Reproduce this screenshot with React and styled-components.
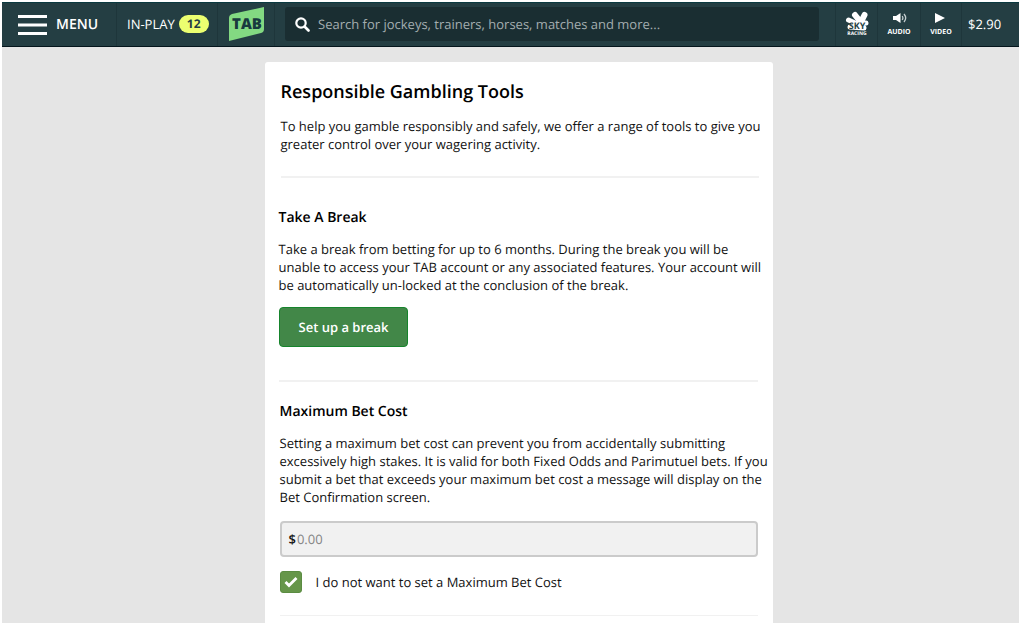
import React from "react";
import styled, { createGlobalStyle } from "styled-components";

const GlobalStyle = createGlobalStyle`
  *, *::before, *::after { box-sizing: border-box; }
  body {
    margin: 0;
    background: #fff;
    color: #111;
    font-family: "Open Sans", "Noto Sans", sans-serif;
    font-size: 13px;
    line-height: 18px;
    text-rendering: geometricPrecision;
  }
  h1, h2, p { margin: 0; }
  button, input { font: inherit; text-rendering: inherit; }
`;

const Page = styled.div`
  display: flex;
  flex-direction: column;
  min-height: 100vh;
  padding: 2px 1px 1px 2px;
`;

const TopBar = styled.header`
  display: flex;
  align-items: stretch;
  height: 45px;
  background: #243e43;
  border-top: 1px solid #0b3a41;
  border-bottom: 1px solid #04151c;
  color: #fff;
`;

const BarButton = styled.button`
  display: flex;
  flex-direction: ${(p) => (p.$stacked ? "column" : "row")};
  align-items: center;
  justify-content: ${(p) => (p.$stacked ? "center" : "flex-start")};
  gap: ${(p) => (p.$stacked ? "2px" : "9px")};
  flex: none;
  width: ${(p) => p.$width};
  padding: ${(p) => p.$padding || "0"};
  border: 0;
  border-right: ${(p) => (p.$last ? "0" : "1px solid #1e363b")};
  background: transparent;
  color: inherit;
  font-weight: ${(p) => (p.$strong ? 600 : 400)};
`;

const BarLink = styled.a`
  display: flex;
  align-items: center;
  gap: 4px;
  flex: none;
  width: ${(p) => p.$width};
  padding: ${(p) => p.$padding};
  border-right: 1px solid #1e363b;
  color: inherit;
  text-decoration: none;
`;

const MenuLines = styled.svg`
  flex: none;
  width: 29px;
  height: 20px;
`;

const MenuText = styled.span`
  font-size: 14px;
`;

const Count = styled.span`
  width: 30px;
  border-radius: 9px;
  background: #ecff70;
  color: #243e43;
  font-size: 12px;
  font-weight: 700;
  text-align: center;
`;

const SearchBox = styled.label`
  display: flex;
  align-items: center;
  gap: 8px;
  flex: 1;
  min-width: 0;
  margin: 4px 16px 5px 10px;
  padding: 0 10px;
  border-radius: 3px;
  background: #1a2e32;
`;

const SearchInput = styled.input`
  flex: 1;
  min-width: 0;
  padding: 0;
  border: 0;
  outline: 0;
  background: transparent;
  color: #fff;
  &::placeholder { color: #a3adaf; opacity: 1; }
`;

const Tools = styled.div`
  display: flex;
  border-left: 1px solid #1e363b;
`;

const ToolLabel = styled.span`
  font-size: 7px;
  line-height: 10px;
  font-weight: 700;
`;

const Main = styled.main`
  display: flex;
  flex: 1;
  justify-content: center;
  padding: 15px 0 0 16px;
  background: #e5e5e5;
`;

const Card = styled.div`
  width: 100%;
  max-width: 508px;
  padding: 18px 14px 7px;
  border-radius: 3px 3px 0 0;
  background: #fff;
`;

const Section = styled.section`
  margin: ${(p) => p.$margin};
  padding: ${(p) => p.$padding};
  border-bottom: ${(p) => (p.$line || 2)}px solid #f1f1f1;
`;

const Title = styled.h1`
  margin-bottom: 13px;
  font-size: 18px;
  line-height: 24px;
  font-weight: 600;
  color: #000;
`;

const Heading = styled.h2`
  margin-bottom: 12px;
  font-size: 14px;
  line-height: 20px;
  font-weight: 600;
  color: #000;
`;

const Copy = styled.p`
  && { margin-right: -12px; }
`;

const PrimaryButton = styled.button`
  display: block;
  height: 40px;
  margin-top: 13px;
  padding: 0 19px;
  border: 1px solid #16842c;
  border-radius: 4px;
  background: #428748;
  color: #fff;
  font-weight: 600;
`;

const Amount = styled.label`
  display: flex;
  align-items: center;
  gap: 1px;
  height: 36px;
  margin: 15px 0 14px;
  padding: 0 7px;
  border: 2px solid #cbcbcb;
  border-radius: 4px;
  background: #f1f1f1;
  font-weight: 600;
`;

const AmountInput = styled.input`
  flex: 1;
  min-width: 0;
  padding: 0;
  border: 0;
  outline: 0;
  background: transparent;
  color: #111;
  font-weight: 400;
  &::placeholder { color: #858585; opacity: 1; }
`;

const CheckRow = styled.label`
  display: flex;
  align-items: center;
  gap: 14px;
`;

const CheckMark = styled.span`
  display: grid;
  width: 22px;
  height: 22px;
  > * { grid-area: 1 / 1; }
  > svg { place-self: center; pointer-events: none; }
`;

const CheckInput = styled.input`
  appearance: none;
  width: 22px;
  height: 22px;
  margin: 0;
  border: 1px solid #5b8c42;
  border-radius: 3px;
  background: #fff;
  &:checked { background: #66964a; }
  &:not(:checked) + svg { visibility: hidden; }
`;

const TabLogo = () => (
  <svg width="35" height="35" viewBox="0 0 35 35" aria-hidden="true">
    <path d="M0 11 Q0 8 3 7 L35 0 V22 Q35 25 32 26 L0 34 Z" fill="#83d982" />
    <text x="18" y="22" textAnchor="middle" fontFamily="Open Sans" fontWeight="800" fontSize="15" fill="#183a3e">TAB</text>
  </svg>
);

const SkyLogo = () => (
  <svg width="24" height="25" viewBox="0 0 24 25" aria-hidden="true">
    <g stroke="#fff" strokeLinecap="round" fill="none">
      <path d="M10 4 L14 9" strokeWidth="6" />
      <path d="M19.5 4 L17 9" strokeWidth="6" />
      <path d="M3.5 9 L10 12" strokeWidth="5" />
      <path d="M5 16 L19 17 M12 13 L21 12" strokeWidth="5" />
    </g>
    <text x="12" y="18" textAnchor="middle" fontFamily="Open Sans" fontWeight="700" fontSize="9" fill="#243e43">SKY</text>
    <text x="12" y="24" textAnchor="middle" fontFamily="Open Sans" fontWeight="700" fontSize="5" fill="#fff">RACING</text>
  </svg>
);

export default function App() {
  return (
    <>
      <GlobalStyle />
      <Page>
        <TopBar>
          <BarButton $width="115px" $padding="0 0 0 16px" $strong>
            <MenuLines viewBox="0 0 29 20" aria-hidden="true">
              <path d="M0 1.5H29M0 10H29M0 18.5H29" stroke="#fff" strokeWidth="3" />
            </MenuLines>
            <MenuText>MENU</MenuText>
          </BarButton>
          <BarLink href="#in-play" $width="101px" $padding="0 0 2px 10px">
            IN-PLAY <Count>12</Count>
          </BarLink>
          <BarLink href="#home" aria-label="TAB home" $width="57px" $padding="0 0 0 11px">
            <TabLogo />
          </BarLink>
          <SearchBox>
            <svg width="15" height="15" viewBox="0 0 15 15" role="img" aria-label="Search">
              <circle cx="6" cy="6" r="4.7" fill="none" stroke="#fff" strokeWidth="2.2" />
              <path d="M9.5 9.5 L13.5 13.5" stroke="#fff" strokeWidth="2.6" strokeLinecap="round" />
            </svg>
            <SearchInput type="text" placeholder="Search for jockeys, trainers, horses, matches and more..." />
          </SearchBox>
          <Tools>
            <BarButton $stacked $width="42px" $padding="0 0 2px" aria-label="Sky Racing">
              <SkyLogo />
            </BarButton>
            <BarButton $stacked $width="43px">
              <svg width="16" height="14" viewBox="0 0 16 14" aria-hidden="true">
                <path d="M2 4H5L9.5 1V11L5 8H2Z" fill="#fff" />
                <path d="M11.2 4Q12.6 6 11.2 8M13 2Q16.4 6 13 10" fill="none" stroke="#c5cfd1" strokeWidth="1.3" />
              </svg>
              <ToolLabel>AUDIO</ToolLabel>
            </BarButton>
            <BarButton $stacked $width="41px">
              <svg width="16" height="14" viewBox="0 0 16 14" aria-hidden="true">
                <path d="M2 1L12 6L2 11Z" fill="#fff" />
              </svg>
              <ToolLabel>VIDEO</ToolLabel>
            </BarButton>
            <BarButton $width="57px" $padding="0 0 2px 6px" $last>$2.90</BarButton>
          </Tools>
        </TopBar>
        <Main>
          <Card>
            <Section $margin="0 0 0 2px" $padding="0 0 23px">
              <Title>Responsible Gambling Tools</Title>
              <Copy>To help you gamble responsibly and safely, we offer a range of tools to give you greater control over your wagering activity.</Copy>
            </Section>
            <Section $margin="0 1px 0 0" $padding="30px 0 33px">
              <Heading>Take A Break</Heading>
              <Copy>Take a break from betting for up to 6 months. During the break you will be unable to access your TAB account or any associated features. Your account will be automatically un-locked at the conclusion of the break.</Copy>
              <PrimaryButton type="button">Set up a break</PrimaryButton>
            </Section>
            <Section $margin="0 1px" $padding="20px 0 22px" $line={1}>
              <Heading>Maximum Bet Cost</Heading>
              <Copy>Setting a maximum bet cost can prevent you from accidentally submitting excessively high stakes. It is valid for both Fixed Odds and Parimutuel bets. If you submit a bet that exceeds your maximum bet cost a message will display on the Bet Confirmation screen.</Copy>
              <Amount>
                $
                <AmountInput type="text" inputMode="decimal" placeholder="0.00" />
              </Amount>
              <CheckRow>
                <CheckMark>
                  <CheckInput type="checkbox" defaultChecked />
                  <svg width="14" height="12" viewBox="0 0 14 12" aria-hidden="true">
                    <path d="M1.5 6L5 9.5L12.5 2" fill="none" stroke="#fff" strokeWidth="2.8" />
                  </svg>
                </CheckMark>
                I do not want to set a Maximum Bet Cost
              </CheckRow>
            </Section>
          </Card>
        </Main>
      </Page>
    </>
  );
}
